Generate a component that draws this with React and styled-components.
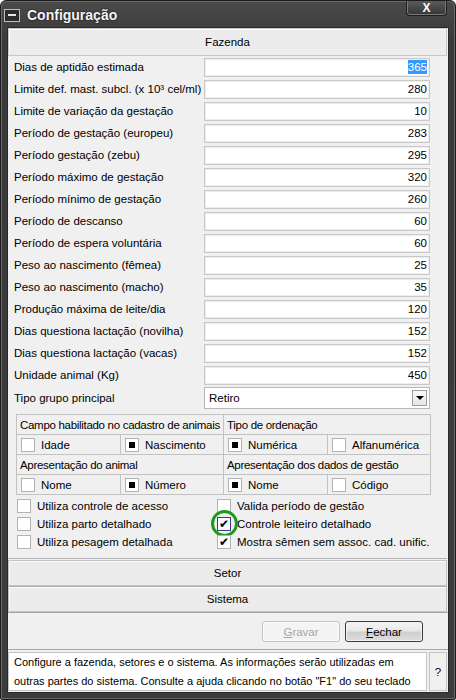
import React from 'react';
import styled, { createGlobalStyle } from 'styled-components';

const GlobalStyle = createGlobalStyle`
  html, body {
    margin: 0;
    padding: 0;
    background: #ffffff;
  }
  body {
    font-family: 'Liberation Sans', Arial, sans-serif;
    font-size: 11px;
    color: #000;
  }
`;

const Window = styled.div`
  width: 456px;
  height: 700px;
  box-sizing: border-box;
  background: linear-gradient(#4a4a4a, #3a3a3a 40px, #3c3c3c);
  border: 1px solid #1c1c1c;
  border-radius: 6px 6px 2px 2px;
  box-shadow: inset 0 0 0 1px #6a6a6a;
  display: flex;
  flex-direction: column;
  overflow: hidden;
`;

const TitleBar = styled.div`
  flex: none;
  height: 26px;
  display: flex;
  align-items: center;
  padding: 0 7px 0 3px;
  position: relative;
`;

const TitleIcon = styled.div`
  width: 14px;
  height: 11px;
  margin-top: 2px;
  border: 1px solid #bdbdbd;
  background: #2c2c2c;
  display: flex;
  align-items: center;
  justify-content: center;
  &::after {
    content: '';
    width: 8px;
    height: 2px;
    background: #e8e8e8;
  }
`;

const Title = styled.span`
  margin-left: 7px;
  margin-top: 1px;
  font-weight: bold;
  font-size: 14px;
  color: #f4f4f4;
  text-shadow: 0 0 2px #000;
`;

const CloseButton = styled.div`
  position: absolute;
  top: -1px;
  right: 8px;
  width: 41px;
  height: 16px;
  box-sizing: border-box;
  border: 1px solid #1e1e1e;
  border-top: none;
  border-radius: 0 0 4px 4px;
  background: linear-gradient(#5e5e5e, #353535);
  box-shadow: inset 0 0 0 1px #7a7a7a;
  color: #fff;
  font-weight: bold;
  font-size: 12px;
  display: flex;
  align-items: center;
  justify-content: center;
`;

const Client = styled.div`
  flex: 1;
  min-height: 0;
  margin: 0 6px 6px 6px;
  background: #f0f0f0;
  border: 1px solid #2a2a2a;
  display: flex;
  flex-direction: column;
`;

const Panel = styled.div`
  flex: none;
  margin-right: 1px;
  height: 531px;
  box-sizing: border-box;
  border-bottom: 1px solid #b4b4b4;
  display: flex;
  flex-direction: column;
`;

const PanelHeader = styled.div`
  flex: none;
  height: 26px;
  border: 1px solid #c6c6c6;
  box-shadow: inset 1px 1px 0 #fff;
  background: #ececec;
  display: flex;
  align-items: center;
  justify-content: center;
  font-size: 11.5px;
`;

const Fields = styled.div`
  padding: 0 17px 0 6px;
`;

const FieldRow = styled.div`
  height: ${(p) => (p.tall ? 23 : 22)}px;
  display: grid;
  grid-template-columns: 190px 226px;
  align-items: center;
`;

const FieldLabel = styled.span`
  font-size: 11.5px;
  white-space: nowrap;
`;

const NumberInput = styled.div`
  height: 19px;
  box-sizing: border-box;
  background: #fff;
  border: 1px solid #c9c9c9;
  box-shadow: inset 0 0 0 1px #ededed;
  display: flex;
  align-items: center;
  justify-content: flex-end;
  padding-right: 2px;
  font-size: 11.5px;
`;

const Selected = styled.span`
  background: #3399ff;
  color: #fff;
  padding: 1px 0;
`;

const SelectBox = styled.div`
  height: 22px;
  box-sizing: border-box;
  background: #fff;
  border: 1px solid #b8b8b8;
  display: flex;
  align-items: center;
  padding: 0 2px 0 4px;
  font-size: 11.5px;
`;

const DropArrow = styled.div`
  margin-left: auto;
  width: 15px;
  height: 16px;
  box-sizing: border-box;
  border: 1px solid #9c9c9c;
  background: linear-gradient(#fafafa, #e6e6e6);
  display: flex;
  align-items: center;
  justify-content: center;
  &::after {
    content: '';
    border-left: 4px solid transparent;
    border-right: 4px solid transparent;
    border-top: 4px solid #000;
  }
`;

const OptionGrid = styled.div`
  margin: 5px 0 0 8px;
  width: 414px;
  display: grid;
  grid-template-columns: 104px 103px 104px 103px;
  grid-auto-rows: 20px;
  border-top: 1px solid #c2c2c2;
  border-left: 1px solid #c2c2c2;
`;

const GridCell = styled.div`
  grid-column: span ${(p) => p.span || 1};
  border-right: 1px solid #c2c2c2;
  border-bottom: 1px solid #c2c2c2;
  display: flex;
  align-items: center;
  gap: 6px;
  padding-left: ${(p) => (p.span ? 3 : 4)}px;
  font-size: 11.5px;
  letter-spacing: ${(p) => (p.span ? '-0.3px' : '0')};
  white-space: nowrap;
  overflow: hidden;
`;

const Box = styled.span`
  width: 14px;
  height: 14px;
  box-sizing: border-box;
  flex: none;
  background: #fff;
  border: 1px solid ${(p) => (p.focus ? '#3a3a8a' : '#b2b2b2')};
  display: flex;
  align-items: center;
  justify-content: center;
  font-size: 12px;
  font-family: 'DejaVu Sans', sans-serif;
  line-height: 1;
  &::after {
    content: '';
    display: ${(p) => (p.filled ? 'block' : 'none')};
    width: 6px;
    height: 6px;
    background: #000;
  }
`;

const CheckList = styled.div`
  margin: 2px 0 0 9px;
  display: grid;
  grid-template-columns: 200px 200px;
  grid-auto-rows: 18px;
`;

const CheckItem = styled.div`
  display: flex;
  align-items: center;
  gap: 6px;
  font-size: 11.5px;
  white-space: nowrap;
  position: relative;
`;

const Ring = styled.span`
  position: absolute;
  left: -6px;
  top: -5px;
  width: 27px;
  height: 27px;
  box-sizing: border-box;
  border: 3px solid #1f9a1f;
  border-radius: 50%;
`;

const TabButton = styled.div`
  flex: none;
  height: 24px;
  margin-right: 1px;
  border: 1px solid #c2c2c2;
  border-top-color: ${(p) => (p.first ? '#c2c2c2' : '#b0b0b0')};
  box-shadow: inset 1px 1px 0 #fafafa;
  background: #ececec;
  display: flex;
  align-items: center;
  justify-content: center;
  font-size: 11.5px;
  margin-top: ${(p) => (p.first ? '1px' : '0')};
`;

const ButtonBar = styled.div`
  flex: none;
  height: 28px;
  padding: 8px 25px 0 0;
  border-top: 1px solid #a8a8a8;
  display: flex;
  align-items: flex-start;
  justify-content: flex-end;
  gap: 5px;
`;

const Button = styled.div`
  width: 78px;
  height: 21px;
  box-sizing: border-box;
  border-radius: 3px;
  display: flex;
  align-items: center;
  justify-content: center;
  font-size: 11.5px;
  border: 1px solid ${(p) => (p.disabled ? '#c4c4c4' : '#3c3c3c')};
  color: ${(p) => (p.disabled ? '#a6a6a6' : '#000')};
  background: ${(p) =>
    p.disabled
      ? '#f4f4f4'
      : 'linear-gradient(#f6f6f6, #e8e8e8 45%, #cfcfcf 55%, #dedede)'};
  box-shadow: inset 0 0 0 1px ${(p) => (p.disabled ? '#fbfbfb' : '#f2f2f2')};
`;

const HelpBar = styled.div`
  flex: 1;
  min-height: 0;
  border-top: 1px solid #a8a8a8;
  display: flex;
  padding: 2px 1px 1px 0;
  gap: 2px;
`;

const HelpText = styled.div`
  flex: 1;
  background: #fff;
  border: 1px solid #c4c4c4;
  padding: 0 5px;
  font-size: 11px;
  line-height: 19px;
  white-space: nowrap;
  overflow: hidden;
`;

const HelpButton = styled.div`
  width: 16px;
  border: 1px solid #c4c4c4;
  background: #f0f0f0;
  display: flex;
  align-items: center;
  justify-content: center;
  font-size: 11.5px;
`;

const fields = [
  ['Dias de aptidão estimada', '365'],
  ['Limite def. mast. subcl. (x 10\u00b3 cel/ml)', '280'],
  ['Limite de variação da gestação', '10'],
  ['Período de gestação (europeu)', '283'],
  ['Período gestação (zebu)', '295'],
  ['Período máximo de gestação', '320'],
  ['Período mínimo de gestação', '260'],
  ['Período de descanso', '60'],
  ['Período de espera voluntária', '60'],
  ['Peso ao nascimento (fêmea)', '25'],
  ['Peso ao nascimento (macho)', '35'],
  ['Produção máxima de leite/dia', '120'],
  ['Dias questiona lactação (novilha)', '152'],
  ['Dias questiona lactação (vacas)', '152'],
  ['Unidade animal (Kg)', '450'],
];

const options = [
  { label: 'Utiliza controle de acesso' },
  { label: 'Valida período de gestão' },
  { label: 'Utiliza parto detalhado' },
  { label: 'Controle leiteiro detalhado', checked: true, focus: true },
  { label: 'Utiliza pesagem detalhada' },
  { label: 'Mostra sêmen sem assoc. cad. unific.', checked: true },
];

const Check = ({ on, children }) => (
  <GridCell>
    <Box filled={on} />
    {children}
  </GridCell>
);

const App = () => {
  return (
    <>
      <GlobalStyle />
      <Window>
        <TitleBar>
          <TitleIcon />
          <Title>Configuração</Title>
          <CloseButton>X</CloseButton>
        </TitleBar>
        <Client>
          <Panel>
            <PanelHeader>Fazenda</PanelHeader>
            <Fields>
              {fields.map(([label, value], i) => (
                <FieldRow key={label}>
                  <FieldLabel>{label}</FieldLabel>
                  <NumberInput>
                    {i === 0 ? <Selected>{value}</Selected> : value}
                  </NumberInput>
                </FieldRow>
              ))}
              <FieldRow tall>
                <FieldLabel>Tipo grupo principal</FieldLabel>
                <SelectBox>
                  Retiro
                  <DropArrow />
                </SelectBox>
              </FieldRow>
            </Fields>
            <OptionGrid>
              <GridCell span={2}>Campo habilitado no cadastro de animais</GridCell>
              <GridCell span={2}>Tipo de ordenação</GridCell>
              <Check>Idade</Check>
              <Check on>Nascimento</Check>
              <Check on>Numérica</Check>
              <Check>Alfanumérica</Check>
              <GridCell span={2}>Apresentação do animal</GridCell>
              <GridCell span={2}>Apresentação dos dados de gestão</GridCell>
              <Check>Nome</Check>
              <Check on>Número</Check>
              <Check on>Nome</Check>
              <Check>Código</Check>
            </OptionGrid>
            <CheckList>
              {options.map((o) => (
                <CheckItem key={o.label}>
                  <Box focus={o.focus}>{o.checked ? '\u2714' : ''}</Box>
                  {o.label}
                  {o.focus && <Ring />}
                </CheckItem>
              ))}
            </CheckList>
          </Panel>
          <TabButton first>Setor</TabButton>
          <TabButton>Sistema</TabButton>
          <ButtonBar>
            <Button disabled>
              <span>
                <u>G</u>ravar
              </span>
            </Button>
            <Button>
              <span>
                <u>F</u>echar
              </span>
            </Button>
          </ButtonBar>
          <HelpBar>
            <HelpText>
              Configure a fazenda, setores e o sistema. As informações serão utilizadas em
              <br />
              outras partes do sistema. Consulte a ajuda clicando no botão "F1" do seu teclado
            </HelpText>
            <HelpButton>?</HelpButton>
          </HelpBar>
        </Client>
      </Window>
    </>
  );
};

export default App;
